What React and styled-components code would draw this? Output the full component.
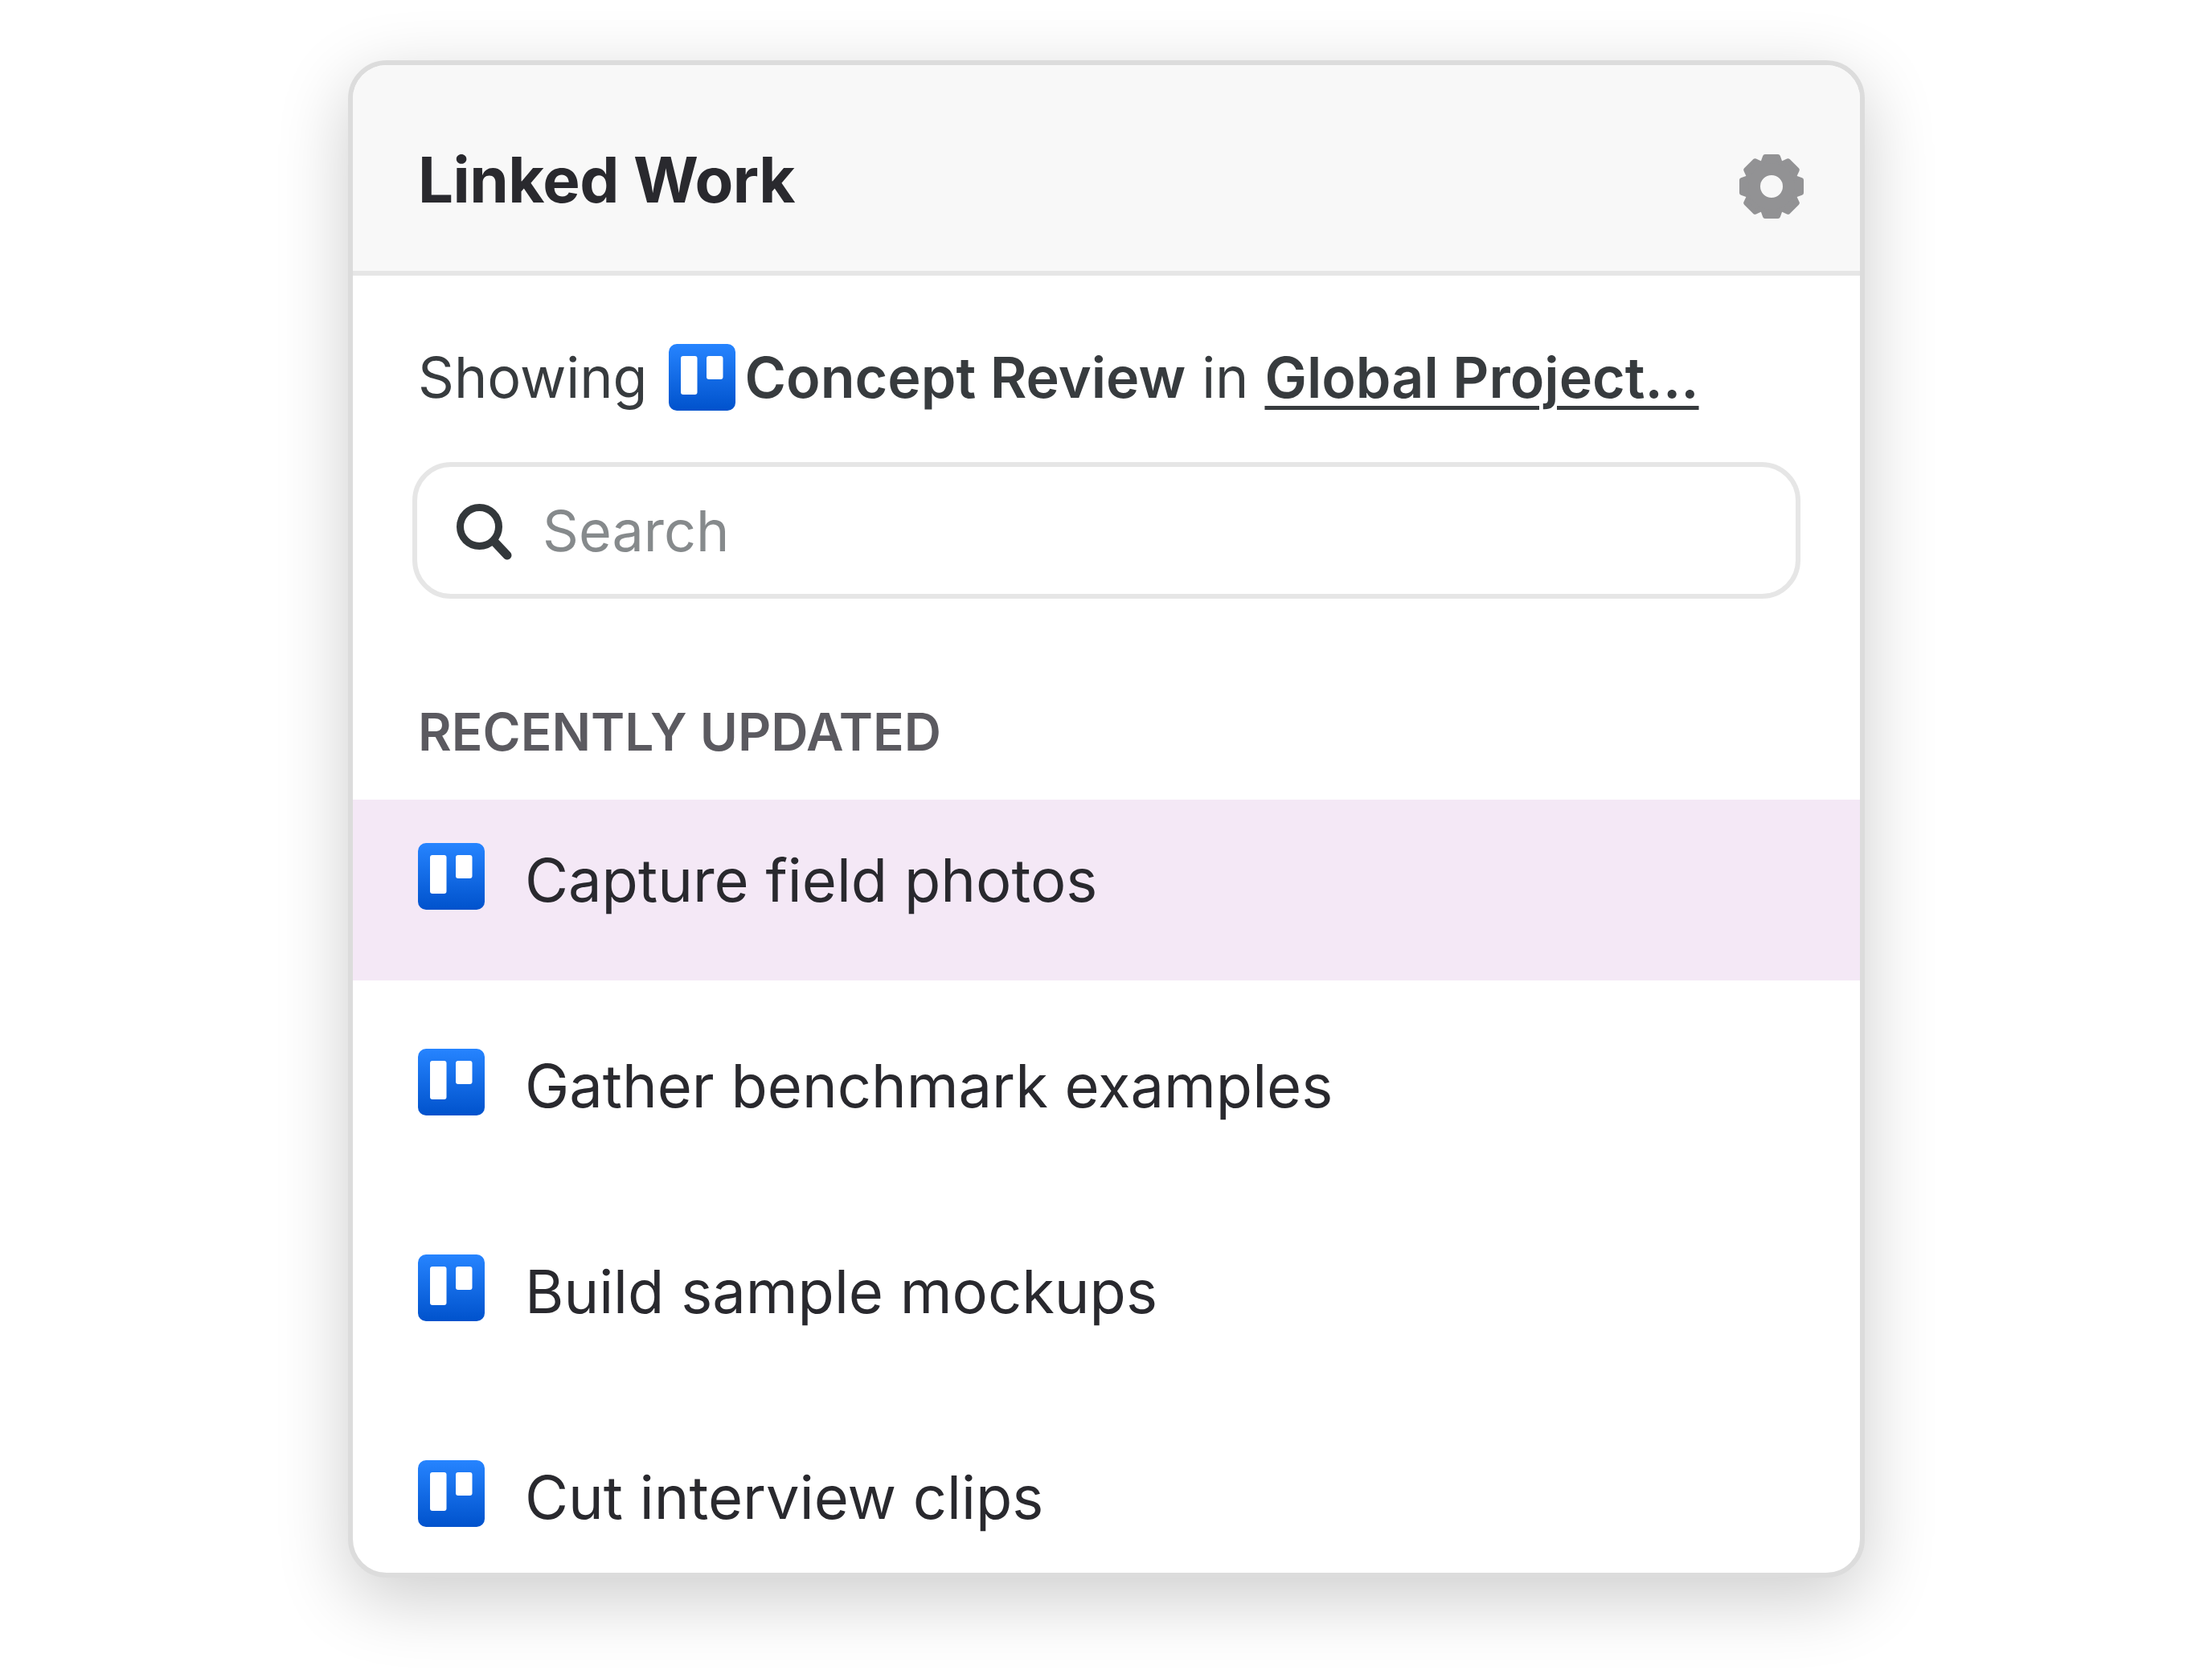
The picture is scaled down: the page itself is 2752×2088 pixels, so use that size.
import React from "react";
import styled, { createGlobalStyle } from "styled-components";

const GlobalStyle = createGlobalStyle`
  * {
    box-sizing: border-box;
  }
  body {
    margin: 0;
    background: #ffffff;
    font-family: Inter, "Liberation Sans", sans-serif;
  }
`;

const Page = styled.div`
  width: 2752px;
  height: 2088px;
  padding: 75px 0 0 433px;
  overflow: hidden;
`;

const Card = styled.div`
  width: 1887px;
  height: 1888px;
  background: #ffffff;
  border: 6px solid #dcdcdc;
  border-radius: 48px;
  box-shadow: 0 26px 90px rgba(0, 0, 0, 0.2);
  overflow: hidden;
`;

const Header = styled.header`
  height: 262px;
  padding: 104px 69px 0 81px;
  display: flex;
  justify-content: space-between;
  align-items: flex-start;
  background: #f8f8f8;
  border-bottom: 6px solid #e6e6e6;
`;

const Title = styled.h1`
  margin: 0;
  font-size: 78px;
  line-height: 78px;
  font-weight: 700;
  letter-spacing: -0.5px;
  color: #29292e;
`;

const GearIcon = styled.svg`
  display: block;
  width: 82px;
  height: 82px;
  margin-top: 6px;
  color: #929294;
`;

const Scope = styled.div`
  margin: 85px 81px 0;
  height: 83px;
  display: flex;
  align-items: center;
  font-size: 70px;
  line-height: 83px;
  color: #373b3e;
  white-space: nowrap;
`;

const ScopeIcon = styled.span`
  display: flex;
  margin: 0 12px 0 26px;
`;

const Strong = styled.b`
  font-weight: 600;
`;

const ScopeIn = styled.span`
  margin: 0 20px;
`;

const ScopeLink = styled.a`
  font-weight: 600;
  color: inherit;
  text-decoration: underline;
  text-decoration-thickness: 5px;
  text-underline-offset: 10px;
`;

const SearchBox = styled.div`
  margin: 64px 74px 0;
  height: 170px;
  padding: 4px 0 0 49px;
  display: flex;
  align-items: center;
  gap: 38px;
  border: 6px solid #e6e6e6;
  border-radius: 48px;
`;

const SearchIcon = styled.svg`
  display: block;
  width: 69px;
  height: 70px;
  color: #33383b;
`;

const SearchText = styled.span`
  font-size: 70px;
  line-height: 83px;
  margin-top: -4px;
  color: #868a8c;
`;

const SectionLabel = styled.h2`
  margin: 134px 81px 52px;
  font-size: 64px;
  line-height: 64px;
  font-weight: 600;
  color: #5b5a60;
  white-space: nowrap;
`;

const TaskList = styled.div`
  display: flex;
  flex-direction: column;
  gap: 31px;
`;

const TaskRow = styled.div`
  flex: none;
  height: 225px;
  padding: 54px 81px 0;
  display: flex;
  align-items: flex-start;
  gap: 50px;
  background: ${(p) => (p.$active ? "#f4e8f6" : "transparent")};
`;

const TaskName = styled.span`
  margin-top: 5px;
  font-size: 74px;
  line-height: 83px;
  color: #29292e;
  white-space: nowrap;
`;

const Gear = () => (
  <GearIcon viewBox="0 0 82 82" fill="currentColor" aria-hidden="true">
    {[0, 45, 90, 135, 180, 225, 270, 315].map((angle) => (
      <path
        key={angle}
        d="M28 18 L33 4 L49 4 L54 18 Z"
        stroke="currentColor"
        strokeWidth="6"
        strokeLinejoin="round"
        transform={`rotate(${angle} 41 41)`}
      />
    ))}
    <circle cx="41" cy="41" r="21.5" fill="none" stroke="currentColor" strokeWidth="15" />
  </GearIcon>
);

const Magnifier = () => (
  <SearchIcon viewBox="0 0 69 70" fill="none" stroke="currentColor" aria-hidden="true">
    <circle cx="28.5" cy="28.5" r="24" strokeWidth="9" />
    <path d="M47 47 L63 64" strokeWidth="11" strokeLinecap="round" />
  </SearchIcon>
);

const BoardIcon = ({ id }) => (
  <svg width="83" height="83" viewBox="0 0 83 83" style={{ display: "block", flex: "none" }} aria-hidden="true">
    <defs>
      <linearGradient id={id} x1="0" y1="0" x2="0" y2="1">
        <stop offset="0" stopColor="#2684ff" />
        <stop offset="1" stopColor="#0052cc" />
      </linearGradient>
    </defs>
    <rect width="83" height="83" rx="10" fill={`url(#${id})`} />
    <rect x="15" y="15" width="20.5" height="48" rx="3" fill="#ffffff" />
    <rect x="47" y="15" width="20.5" height="29" rx="3" fill="#ffffff" />
  </svg>
);

const tasks = [
  "Capture field photos",
  "Gather benchmark examples",
  "Build sample mockups",
  "Cut interview clips",
];

export default function App() {
  return (
    <Page>
      <GlobalStyle />
      <Card>
        <Header>
          <Title>Linked Work</Title>
          <Gear />
        </Header>
        <Scope>
          Showing
          <ScopeIcon>
            <BoardIcon id="scope-board" />
          </ScopeIcon>
          <Strong>Concept Review</Strong>
          <ScopeIn>in</ScopeIn>
          <ScopeLink>Global Project...</ScopeLink>
        </Scope>
        <SearchBox>
          <Magnifier />
          <SearchText>Search</SearchText>
        </SearchBox>
        <SectionLabel>RECENTLY UPDATED</SectionLabel>
        <TaskList>
          {tasks.map((task, index) => (
            <TaskRow key={task} $active={index === 0}>
              <BoardIcon id={`task-board-${index}`} />
              <TaskName>{task}</TaskName>
            </TaskRow>
          ))}
        </TaskList>
      </Card>
    </Page>
  );
}
